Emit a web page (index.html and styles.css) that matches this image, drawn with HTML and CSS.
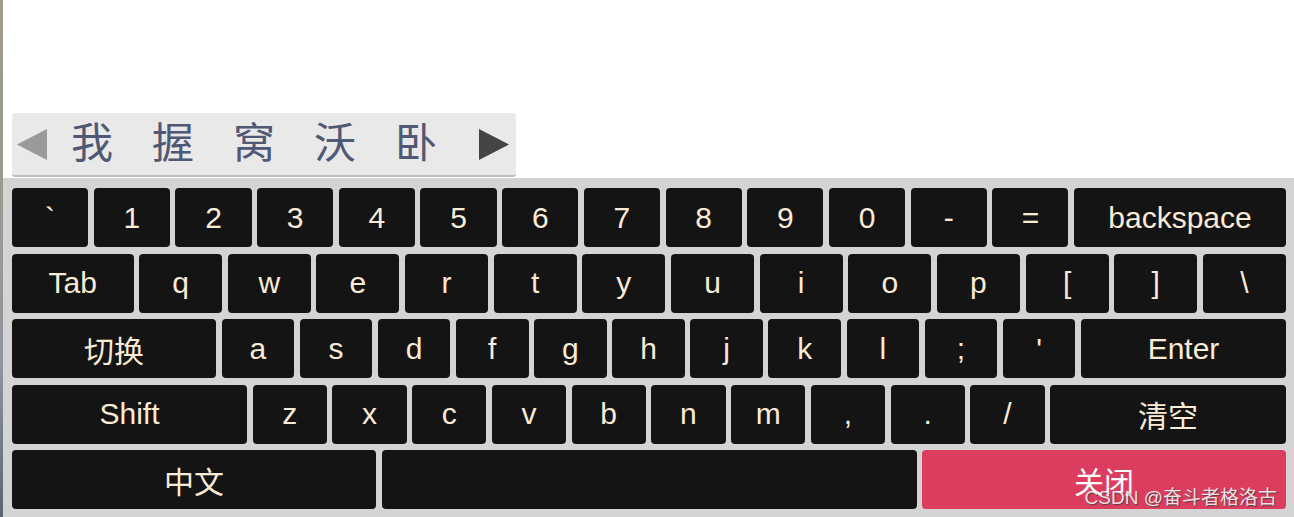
FILE: index.html
```html
<!DOCTYPE html>
<html lang="zh-CN">
<head>
<meta charset="utf-8">
<title>虚拟键盘</title>
<link rel="stylesheet" href="styles.css">
</head>
<body>
<div class="page">
  <div class="edge"></div>
  <div class="main">
    <div class="blank"></div>
    <div class="cands">
      <svg class="arrow" width="30" height="31" viewBox="0 0 30 31"><polygon points="0,15.5 30,0 30,31" fill="#9a9a9a"/></svg>
      <div class="cand-list">
        <span class="cand">我</span>
        <span class="cand">握</span>
        <span class="cand">窝</span>
        <span class="cand">沃</span>
        <span class="cand">卧</span>
      </div>
      <svg class="arrow arrow-right" width="30" height="31" viewBox="0 0 30 31"><polygon points="0,0 30,15.5 0,31" fill="#444444"/></svg>
    </div>
    <div class="keyboard">
      <div class="row row1">
        <div class="key">`</div><div class="key">1</div><div class="key">2</div><div class="key">3</div><div class="key">4</div><div class="key">5</div><div class="key">6</div><div class="key">7</div><div class="key">8</div><div class="key">9</div><div class="key">0</div><div class="key">-</div><div class="key">=</div><div class="key">backspace</div>
      </div>
      <div class="row row2">
        <div class="key">Tab</div><div class="key">q</div><div class="key">w</div><div class="key">e</div><div class="key">r</div><div class="key">t</div><div class="key">y</div><div class="key">u</div><div class="key">i</div><div class="key">o</div><div class="key">p</div><div class="key">[</div><div class="key">]</div><div class="key">\</div>
      </div>
      <div class="row row3">
        <div class="key">切换</div><div class="key">a</div><div class="key">s</div><div class="key">d</div><div class="key">f</div><div class="key">g</div><div class="key">h</div><div class="key">j</div><div class="key">k</div><div class="key">l</div><div class="key">;</div><div class="key">'</div><div class="key">Enter</div>
      </div>
      <div class="row row4">
        <div class="key">Shift</div><div class="key">z</div><div class="key">x</div><div class="key">c</div><div class="key">v</div><div class="key">b</div><div class="key">n</div><div class="key">m</div><div class="key">,</div><div class="key">.</div><div class="key">/</div><div class="key">清空</div>
      </div>
      <div class="row row5">
        <div class="key">中文</div><div class="key"></div><div class="key key-close">关闭</div>
      </div>
      <div class="watermark">CSDN @奋斗者格洛古</div>
    </div>
  </div>
</div>
</body>
</html>
```

FILE: styles.css
```css
html, body {
  margin: 0;
  padding: 0;
  background: #ffffff;
  overflow: hidden;
}

.page {
  display: flex;
  height: 517px;
  font-family: "Liberation Sans", "Noto Sans CJK SC", Arial, sans-serif;
}

.edge {
  width: 3px;
  flex: none;
  background: linear-gradient(#a19b86 0%, #9a9a92 40%, #8f96a0 70%, #5c6373 100%);
}

.main {
  flex: 1;
  display: flex;
  flex-direction: column;
  min-width: 0;
}

.blank {
  height: 113px;
  flex: none;
}

.cands {
  margin-left: 9px;
  width: 504px;
  height: 64px;
  box-sizing: border-box;
  background: #e9e9e9;
  border-radius: 3px;
  border-bottom: 2px solid #bdbdbd;
  display: flex;
  align-items: center;
  padding-left: 5px;
  flex: none;
}

.arrow {
  flex: none;
  display: block;
}

.cand-list {
  display: flex;
  gap: 39px;
  margin-left: 24px;
  margin-right: 42px;
}

.cand {
  font-family: "Noto Sans CJK SC", sans-serif;
  font-size: 42px;
  line-height: 1;
  width: 42px;
  color: #4f5874;
  margin-top: -9px;
}

.keyboard {
  position: relative;
  margin-top: 1px;
  flex: 1;
  background: #d4d4d4;
  padding: 10px 8px 8px 9px;
  display: flex;
  flex-direction: column;
  gap: 6.5px;
}

.row {
  display: grid;
  column-gap: 5.5px;
  height: 59px;
  flex: none;
}

.row1 { grid-template-columns: repeat(13, 1fr) 212px; }
.row2 { grid-template-columns: 121.5px repeat(13, 1fr); }
.row3 { grid-template-columns: 204px repeat(11, 1fr) 205px; }
.row4 { grid-template-columns: 235px repeat(10, 1fr) 236px; }
.row5 { grid-template-columns: 364px 1fr 364px; }

.key {
  background: #141414;
  border-radius: 4px;
  color: #faebd7;
  font-size: 30px;
  display: flex;
  align-items: center;
  justify-content: center;
  white-space: nowrap;
}

.key-close {
  background: #dc3d5e;
  color: #ffffff;
}

.watermark {
  position: absolute;
  right: 17px;
  bottom: 8px;
  font-family: "Liberation Sans", "Noto Sans CJK SC", sans-serif;
  font-size: 19px;
  color: rgba(255, 255, 255, 0.85);
  text-shadow: 1px 1px 1px rgba(60, 60, 60, 0.8);
  white-space: nowrap;
}
```
